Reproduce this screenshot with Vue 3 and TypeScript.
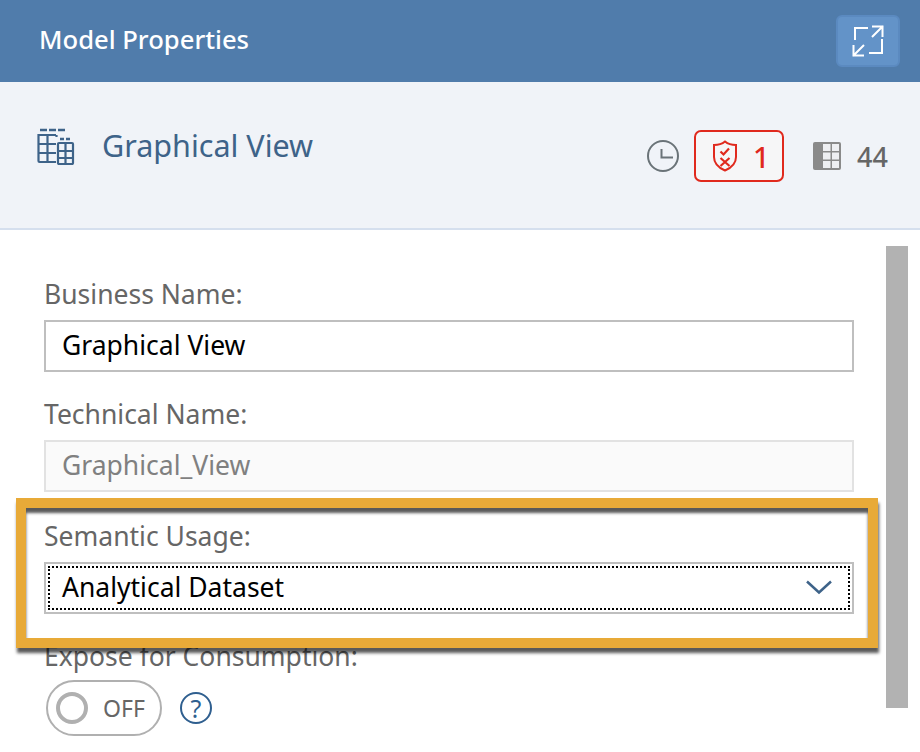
<template>
  <div class="panel">
    <header class="topbar">
      <h1 class="topbar-title">Model Properties</h1>
      <button class="expand-btn" aria-label="Expand">
        <svg width="32" height="32" viewBox="0 0 32 32" fill="none" stroke="#fff" stroke-width="2">
          <path d="M16 3H3v12" />
          <path d="M30 14v14H17" />
          <path d="M20 12 31 1M20 1.500h10.500V12" />
          <path d="M12 20 1 31M1.500 20v10.500H12" />
        </svg>
      </button>
    </header>

    <section class="summary">
      <div class="summary-name">
        <svg class="view-icon" width="38" height="38" viewBox="0 0 38 38" fill="none" stroke="#3e6389" stroke-width="2">
          <path d="M3 3h7M12 3h7M21 3h7M23 12h4M29 12h4" stroke-width="2.500" />
          <path d="M19 8H1.500v26a1 1 0 0 0 1 1H19M1.500 17H19M1.500 26H19M10.500 8v27M19.500 8v2" stroke-width="2.200" />
          <rect x="21" y="16" width="15" height="21" rx="1" stroke-width="2.200" />
          <path d="M21 24h15M21 31h15M28.500 16v21" stroke-width="2.200" />
        </svg>
        <h2 class="summary-title">Graphical View</h2>
      </div>
      <div class="summary-meta">
        <svg width="32" height="32" viewBox="0 0 32 32" fill="none" stroke="#6a7378" stroke-width="2">
          <circle cx="16" cy="16" r="15" />
          <path d="M14.500 9v8.500H26" />
        </svg>
        <div class="status-badge">
          <svg width="26" height="32" viewBox="0 0 26 32" fill="none" stroke="#e0291d" stroke-width="2">
            <path d="M13 1.500c3 2.500 7 3.500 11 3.500v12c0 6-4 10.500-11 13.500C6 27.500 2 23 2 17V5c4 0 8-1 11-3.500Z" />
            <path d="m8.500 11.500 3 3 5.500-6M8.500 18l9 8M17.500 18l-9 8" stroke-width="2.200" />
          </svg>
          <span>1</span>
        </div>
        <svg class="rows-icon" width="28" height="28" viewBox="0 0 28 28">
          <rect width="28" height="28" rx="2" fill="#8a8a8a" />
          <path d="M10 2h7.500v7H10zM19 2h7v7h-7zM10 10.500h7.500v7H10zM19 10.500h7v7h-7zM10 19h7.500v7H10zM19 19h7v7h-7z" fill="#eeeff2" />
        </svg>
        <span class="rows-count">44</span>
      </div>
    </section>

    <main class="form">
      <div class="field">
        <label class="field-label">Business Name:</label>
        <input class="field-input" type="text" value="Graphical View" />
      </div>
      <div class="field">
        <label class="field-label">Technical Name:</label>
        <input class="field-input is-disabled" type="text" value="Graphical_View" disabled />
      </div>
      <div class="field is-semantic">
        <label class="field-label">Semantic Usage:</label>
        <div class="field-select">
          <span>Analytical Dataset</span>
          <svg width="26" height="15" viewBox="0 0 26 15" fill="none" stroke="#3e6389" stroke-width="2.500">
            <path d="m1 1.500 12 11 12-11" />
          </svg>
        </div>
      </div>
      <div class="field">
        <label class="field-label">Expose for Consumption:</label>
        <div class="toggle-row">
          <div class="toggle">
            <span class="toggle-knob"></span>
            <span class="toggle-text">OFF</span>
          </div>
          <span class="help">?</span>
        </div>
      </div>

      <div class="scrollbar"></div>
      <div class="highlight"></div>
    </main>
  </div>
</template>

<script setup lang="ts">
</script>

<style>
html,
body {
  margin: 0;
  background: #fff;
}
</style>

<style scoped>
.panel {
  width: 920px;
  height: 752px;
  overflow: hidden;
  display: flex;
  flex-direction: column;
  font-family: "Noto Sans", "Open Sans", sans-serif;
  background: #fff;
}

.topbar {
  height: 82px;
  flex: none;
  display: flex;
  align-items: center;
  justify-content: space-between;
  padding: 0 20px 0 39px;
  background: #507cab;
}

.topbar-title {
  margin: 0 0 3px;
  font-size: 25.6px;
  font-weight: 500;
  color: #fff;
}

.expand-btn {
  width: 64px;
  height: 52px;
  padding: 0;
  display: flex;
  align-items: center;
  justify-content: center;
  border: 2px solid #5b8ac0;
  border-radius: 6px;
  background: #6393c8;
}

.summary {
  height: 148px;
  box-sizing: border-box;
  flex: none;
  display: flex;
  justify-content: space-between;
  padding: 44px 32px 0 37px;
  background: #f0f3f8;
  border-bottom: 2px solid #d5dfee;
}

.summary-name {
  display: flex;
  align-items: flex-start;
  gap: 27px;
}

.view-icon {
  margin-top: 1px;
}

.summary-title {
  margin: 0;
  font-size: 30.5px;
  line-height: 38px;
  font-weight: 400;
  color: #3e6389;
}

.summary-meta {
  display: flex;
  align-items: center;
  height: 52px;
  margin-top: 4px;
}

.status-badge {
  width: 90px;
  height: 52px;
  box-sizing: border-box;
  margin: 0 29px 0 15px;
  padding-left: 16px;
  display: flex;
  align-items: center;
  gap: 15px;
  border: 2px solid #e0291d;
  border-radius: 7px;
  background: #f6f6f7;
  font-size: 29px;
  font-weight: 500;
  color: #e0291d;
}

.rows-count {
  margin-left: 16px;
  font-size: 27px;
  font-weight: 500;
  color: #666;
}

.form {
  position: relative;
  flex: 1;
  padding: 50px 0 0 44px;
}

.field {
  width: 810px;
  margin-bottom: 28px;
}

.field.is-semantic {
  margin-top: 30px;
}

.field-label {
  display: block;
  height: 28px;
  margin-bottom: 12px;
  font-size: 26.5px;
  line-height: 28px;
  color: #666;
}

.field-input,
.field-select {
  width: 100%;
  height: 52px;
  box-sizing: border-box;
  display: flex;
  align-items: center;
  padding: 0 16px 2px;
  border: 2px solid #bfbfbf;
  background: #fff;
  font-family: inherit;
  font-size: 26.5px;
  color: #000;
}

.field-input.is-disabled {
  border-color: #e2e2e2;
  background: #fafafa;
  color: #808080;
}

.field-select {
  justify-content: space-between;
  padding-right: 20px;
  outline: 2px dotted #000;
  outline-offset: -6px;
}

.toggle-row {
  display: flex;
  align-items: center;
  gap: 18px;
  margin-left: 2px;
  margin-top: -2px;
}

.toggle {
  width: 116px;
  height: 56px;
  box-sizing: border-box;
  display: flex;
  align-items: center;
  gap: 15px;
  padding-left: 8px;
  border: 2px solid #b0b0b0;
  border-radius: 28px;
}

.toggle-knob {
  width: 32px;
  height: 32px;
  border: 4.5px solid #b0b0b0;
  border-radius: 50%;
  box-sizing: border-box;
}

.toggle-text {
  font-size: 23px;
  color: #666;
}

.help {
  width: 32px;
  height: 32px;
  box-sizing: border-box;
  display: flex;
  align-items: center;
  justify-content: center;
  border: 2px solid #2f5f8f;
  border-radius: 50%;
  font-size: 25px;
  color: #2f5f8f;
}

.scrollbar {
  position: absolute;
  top: 16px;
  right: 12px;
  width: 22px;
  height: 462px;
  background: #b2b2b2;
}

.highlight {
  position: absolute;
  left: 16px;
  top: 268px;
  width: 862px;
  height: 150px;
  box-sizing: border-box;
  border: 10px solid #e8aa38;
  box-shadow: 1px 5px 3px rgba(0, 0, 0, 0.65), inset 0 5px 3px rgba(0, 0, 0, 0.65);
  pointer-events: none;
}
</style>
